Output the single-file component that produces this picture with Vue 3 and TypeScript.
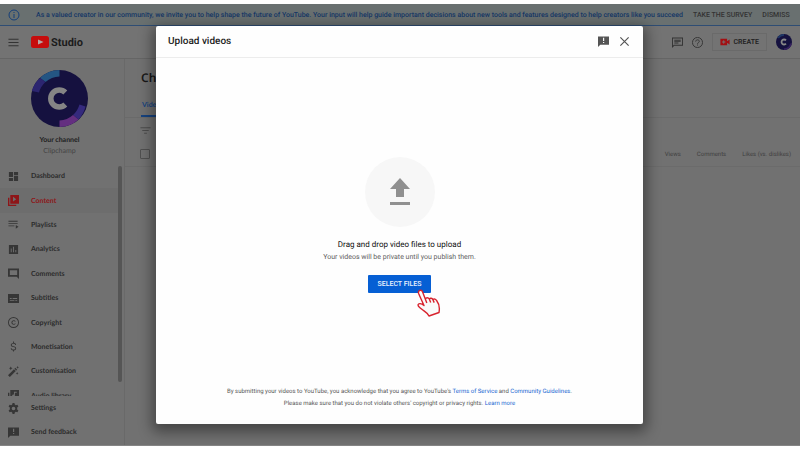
<script setup lang="ts">
interface NavItem {
  label: string
  icon: string
  active?: boolean
}

const navItems: NavItem[] = [
  { label: 'Dashboard', icon: 'M2 2h9v11H2zM13 2h9v7h-9zM2 15h9v7H2zM13 11h9v11h-9z' },
  { label: 'Content', icon: 'M0 6h3v15h15v3H0zM5 0h19v19H5zM11 4v10l7-5z', active: true },
  { label: 'Playlists', icon: 'M1 4h20v2H1zM1 9h20v2H1zM1 14h13v2H1zM17 13l6 4-6 4z' },
  { label: 'Analytics', icon: 'M2 2h20v20H2zM6 10v8h2v-8zM11 6v12h2V6zM16 13v5h2v-5z' },
  { label: 'Comments', icon: 'M0 1h24v23l-5-5H0zM4 5v10h16V5z' },
  { label: 'Subtitles', icon: 'M0 2h24v20H0zM4 11v2h4v-2zM10 11v2h10v-2zM4 15v2h10v-2zM16 15v2h4v-2z' },
  { label: 'Copyright', icon: 'M12 0a12 12 0 1 0 0 24 12 12 0 0 0 0-24zm0 2a10 10 0 1 1 0 20 10 10 0 0 1 0-20zM17 10a5 5 0 1 0 0 4h-2.200a3 3 0 1 1 0-4z' },
  { label: 'Monetisation', icon: 'M11 1h2v3c3 .5 4.500 2 4.500 4.500h-2C15.500 6.500 14 6 12 6c-2.500 0-3.800 1-3.800 2.500 0 1.600 1.300 2.200 4 2.900 3.300.8 5.600 2 5.600 4.800 0 2.300-1.800 3.900-4.800 4.300V23h-2v-2.500c-3-.4-5-2-5-4.800h2c.2 2 1.500 2.900 4 2.900s3.700-1 3.700-2.300c0-1.400-.8-2.200-4-3-3.500-.8-5.600-2-5.600-4.700 0-2.300 1.900-4 4.900-4.500z' },
  { label: 'Customisation', icon: 'M0 20L13 7l4 4L4 24zM14 6l2-2 4 4-2 2zM6 1l1.500 3L10 5 7.500 6 6 9 4.500 6 2 5l2.500-1zM20 13l1 2 2 1-2 1-1 2-1-2-2-1 2-1zM21 0l1 2 2 1-2 1-1 2-1-2-2-1 2-1z' },
  { label: 'Audio library', icon: 'M0 6h3v15h15v3H0zM5 0h19v19H5zM13 4v6a3 3 0 1 0 2 3V6h4V4z' },
]

const feedbackIcon = 'M0 1h24v18H5l-5 5zM11 4v7h2.500V4zM11 13v2.500h2.500V13z'

const footerItems: NavItem[] = [
  { label: 'Settings', icon: 'M10 0h4l.8 3.500 2.200 1.300 3.500-1 2.200 3.700-2.700 2.500v4l2.700 2.500-2.200 3.700-3.500-1-2.200 1.300L14 24h-4l-.8-3.500L7 19.200l-3.500 1-2.200-3.700L4 14v-4L1.300 7.500l2.200-3.700 3.500 1 2.200-1.300zM12 8a4 4 0 1 0 0 8 4 4 0 0 0 0-8z' },
  { label: 'Send feedback', icon: feedbackIcon },
]

const columns: string[] = ['Views', 'Comments', 'Likes (vs. dislikes)']
</script>

<template>
  <div class="page">
    <div class="banner">
      <svg class="info" viewBox="0 0 24 24" aria-hidden="true">
        <circle cx="12" cy="12" r="10" fill="none" stroke="currentColor" stroke-width="2" />
        <path fill="currentColor" d="M11 6h2v2h-2zM11 10h2v8h-2z" />
      </svg>
      <p>As a valued creator in our community, we invite you to help shape the future of YouTube. Your input will help guide important decisions about new tools and features designed to help creators like you succeed</p>
      <button type="button">TAKE THE SURVEY</button>
      <button type="button">DISMISS</button>
    </div>

    <header class="topbar">
      <button class="plain" type="button" aria-label="Menu">
        <svg class="icon" viewBox="0 0 24 24"><path d="M1 4h22v2H1zM1 11h22v2H1zM1 18h22v2H1z" /></svg>
      </button>
      <a class="brand" href="#">
        <svg viewBox="0 0 36 24" aria-hidden="true">
          <rect width="36" height="24" rx="5" fill="#c60d0d" />
          <path d="M14 7l11 5-11 5z" fill="#b9a5a5" />
        </svg>
        <span>Studio</span>
      </a>
      <div class="tools">
        <button class="plain" type="button" aria-label="Messages">
          <svg class="icon" viewBox="0 0 24 24"><path fill-rule="evenodd" d="M0 1h24v18H5l-5 5zM2 3v16l2-2h18V3zM5 6h14v2H5zM5 9h14v2H5zM5 12h9v2H5z" /></svg>
        </button>
        <button class="plain" type="button" aria-label="Help">
          <svg class="icon" viewBox="0 0 24 24">
            <circle cx="12" cy="12" r="11" fill="none" stroke="currentColor" stroke-width="2" />
            <path d="M8 10c0-5 8-5 8-.5 0 2.500-4 3-4 5.500" fill="none" stroke="currentColor" stroke-width="2" />
            <path d="M11 16.500h2v2h-2z" />
          </svg>
        </button>
        <button class="create" type="button">
          <svg viewBox="0 0 24 18" aria-hidden="true">
            <path fill="#a30f12" fill-rule="evenodd" d="M1 1h16v6l6-4v12l-6-4v6H1zM8 5v3H5v2h3v3h2v-3h3V8h-3V5z" />
          </svg>
          CREATE
        </button>
        <svg class="avatar" viewBox="0 0 57 57" aria-hidden="true">
          <circle cx="28.500" cy="28.500" r="28.500" fill="#15113f" />
          <path d="M5 12A28.500 28.500 0 0 1 28.500 0v6A22 22 0 0 0 10 16z" fill="#1f3766" />
          <path d="M57 34A28.500 28.500 0 0 1 28.500 57v-6A22 22 0 0 0 50 34z" fill="#35205f" />
          <path d="M35.500 22.500a9 9 0 1 0 0 12" fill="none" stroke="#888" stroke-width="6.500" />
        </svg>
      </div>
    </header>

    <div class="body">
      <aside class="sidebar">
        <div class="channel">
          <svg class="portrait" viewBox="0 0 57 57" aria-hidden="true">
            <circle cx="28.500" cy="28.500" r="28.500" fill="#15113f" />
            <path d="M9 8A28.500 28.500 0 0 1 28.500 0v6.500a22 22 0 0 0-14 5.500z" fill="#245583" />
            <path d="M.8 21A28.500 28.500 0 0 1 9 8l5.500 4A22 22 0 0 0 8 22.500z" fill="#2c2570" />
            <path d="M54.500 36.500A28.500 28.500 0 0 1 47.500 49.500L42 45a22 22 0 0 0 6.500-10.500z" fill="#352a7d" />
            <path d="M47.500 49.500A28.500 28.500 0 0 1 28.500 57v-6.500A22 22 0 0 0 42 45z" fill="#642f80" />
            <path d="M34.300 22.500a8.500 8.500 0 1 0 0 12" fill="none" stroke="#858585" stroke-width="5.500" />
          </svg>
          <strong>Your channel</strong>
          <span>Clipchamp</span>
        </div>
        <nav class="scroller">
          <ul>
            <li v-for="item in navItems" :key="item.label">
              <a href="#" :class="{ active: item.active }">
                <svg class="icon" viewBox="0 0 24 24" aria-hidden="true"><path fill-rule="evenodd" :d="item.icon" /></svg>
                {{ item.label }}
              </a>
            </li>
          </ul>
          <span class="thumb"></span>
        </nav>
        <ul class="footer-nav">
          <li v-for="item in footerItems" :key="item.label">
            <a href="#">
              <svg class="icon" viewBox="0 0 24 24" aria-hidden="true"><path fill-rule="evenodd" :d="item.icon" /></svg>
              {{ item.label }}
            </a>
          </li>
        </ul>
      </aside>

      <main class="content">
        <h1>Channel content</h1>
        <div class="tabs"><a href="#">Videos</a></div>
        <div class="filter">
          <svg class="icon" viewBox="0 0 24 24" aria-hidden="true"><path d="M1 5h22v2H1zM5 11h14v2H5zM9 17h6v2H9z" /></svg>
        </div>
        <div class="list-head">
          <input type="checkbox" aria-label="Select all videos" />
          <span v-for="column in columns" :key="column">{{ column }}</span>
        </div>
      </main>
    </div>

    <section class="dialog" role="dialog" aria-labelledby="dialog-title">
      <header>
        <h2 id="dialog-title">Upload videos</h2>
        <button class="plain" type="button" aria-label="Send feedback">
          <svg class="icon" viewBox="0 0 24 24"><path fill-rule="evenodd" :d="feedbackIcon" /></svg>
        </button>
        <button class="plain" type="button" aria-label="Close">
          <svg class="icon" viewBox="0 0 24 24"><path d="M3 3l18 18M21 3L3 21" stroke="currentColor" stroke-width="2.600" /></svg>
        </button>
      </header>
      <div class="drop">
        <div class="disc">
          <svg viewBox="0 0 22 28" aria-hidden="true"><path d="M11 0l10 11h-6v8H7v-8H1zM1 24h20v3H1z" fill="#909090" /></svg>
        </div>
        <p class="lead">Drag and drop video files to upload</p>
        <p class="hint">Your videos will be private until you publish them.</p>
        <div class="action">
          <button class="select" type="button">SELECT FILES</button>
          <svg class="hand" viewBox="0 0 24 28" aria-hidden="true">
            <path d="M1.800 2.200C2.800.8 4.800 1 5.500 2.800L8.300 10c.8-1.700 3-1.700 4 0 .9-1.300 2.900-1 3.600.6 1.300-1.200 3-.5 3.700.9C22 14.500 23 18 22 23.500L12 27c-1.200-3.300-4.800-4.500-7.800-7.200-1.400-1.300-3.400-2.500-3.200-4 .4-1.600 3.200-1.700 6 .7L1.600 4.500c-.3-.8-.2-1.600.2-2.300zM8.300 10l1.500 4M12.300 10l1.400 3.500M15.900 10.600l1.300 3" fill="#fafafa" stroke="#d8232e" stroke-width="1.400" stroke-linejoin="round" />
          </svg>
        </div>
      </div>
      <footer>
        <p>By submitting your videos to YouTube, you acknowledge that you agree to YouTube's <a href="#">Terms of Service</a> and <a href="#">Community Guidelines</a>.</p>
        <p>Please make sure that you do not violate others' copyright or privacy rights. <a href="#">Learn more</a></p>
      </footer>
    </section>
  </div>
</template>

<style>
body {
  margin: 0;
  background: #fff;
}
</style>

<style scoped>
.page {
  position: relative;
  box-sizing: border-box;
  height: 100vh;
  padding: 4px 0;
  display: flex;
  flex-direction: column;
  overflow: hidden;
  font-family: Roboto, 'Liberation Sans', sans-serif;
  text-rendering: geometricPrecision;
  color: #262626;
}

p,
h1,
h2,
ul {
  margin: 0;
  padding: 0;
}

ul {
  list-style: none;
}

a {
  color: inherit;
  text-decoration: none;
}

button {
  border: 0;
  padding: 0;
  background: none;
  font: inherit;
  color: inherit;
  text-rendering: inherit;
  white-space: nowrap;
}

.plain {
  display: flex;
}

.icon {
  display: block;
  width: 11px;
  height: 11px;
  flex: none;
  fill: currentColor;
}

.banner {
  display: flex;
  align-items: center;
  height: 21px;
  padding: 0 13px 0 8px;
  background: #697070;
  border-bottom: 1px solid #2e4d74;
  font-size: 7px;
  font-weight: 500;
  color: #333;
}

.banner p {
  flex: 1;
  white-space: nowrap;
  color: #153766;
}

.banner button {
  margin-left: 10px;
}

.info {
  flex: none;
  width: 12px;
  height: 12px;
  margin-right: 16px;
  color: #153f79;
}

.topbar {
  display: flex;
  align-items: center;
  height: 32px;
  padding: 0 8px;
  background: #737373;
  border-bottom: 1px solid #656565;
  color: #333;
}

.brand {
  display: flex;
  align-items: center;
  gap: 2px;
  margin-left: 12px;
}

.brand svg {
  width: 18px;
  height: 12px;
}

.brand span {
  font-size: 11px;
  font-weight: 700;
  color: #1c1c1c;
}

.tools {
  display: flex;
  align-items: center;
  gap: 9px;
  margin-left: auto;
}

.create {
  display: flex;
  align-items: center;
  gap: 4px;
  height: 18px;
  padding: 0 7px;
  border: 1px solid #6a6a6a;
  font-size: 7px;
  font-weight: 600;
  color: #222;
}

.create svg {
  width: 10px;
  height: 8px;
}

.avatar {
  width: 16px;
  height: 16px;
}

.body {
  flex: 1;
  min-height: 0;
  display: flex;
  background: #717171;
  border-bottom: 1px solid #858585;
}

.sidebar {
  box-sizing: border-box;
  width: 125px;
  flex: none;
  display: flex;
  flex-direction: column;
  border-right: 1px solid #696969;
  font-family: Lato, 'Noto Sans', sans-serif;
}

.channel {
  display: flex;
  flex-direction: column;
  align-items: center;
  height: 94px;
  padding: 11px 5px 0 0;
  font-size: 7px;
  line-height: 11px;
  color: #444;
}

.channel strong {
  margin-top: 8px;
  font-weight: 700;
  color: #1d1d1d;
}

.portrait {
  width: 57px;
  height: 57px;
}

.scroller {
  position: relative;
  flex: 1;
  min-height: 0;
  overflow: hidden;
}

.scroller ul {
  display: grid;
  grid-auto-rows: 1fr;
  height: 244px;
}

.thumb {
  position: absolute;
  top: 2px;
  right: 2px;
  bottom: 14px;
  width: 4px;
  border-radius: 2px;
  background: #555;
}

.sidebar li {
  display: grid;
}

.sidebar li a {
  display: flex;
  align-items: center;
  gap: 12px;
  margin-right: 6px;
  padding-left: 8px;
  font-size: 7px;
  font-weight: 700;
  color: #2b2b2b;
}

.sidebar li a .icon {
  color: #363636;
}

.sidebar li a.active,
.sidebar li a.active .icon {
  color: #8e1518;
}

.sidebar li a.active {
  background: #6d6d6d;
}

.footer-nav {
  display: grid;
  grid-auto-rows: 24px;
  padding-bottom: 1px;
}

.content {
  flex: 1;
  min-width: 0;
}

h1 {
  padding: 10px 16px 0;
  font-family: 'Noto Sans', 'Open Sans', sans-serif;
  font-size: 12px;
  line-height: 18px;
  font-weight: 600;
  color: #181818;
}

.tabs {
  height: 30px;
  padding-left: 16px;
  display: flex;
  border-bottom: 1px solid #6a6a6a;
  font-family: Lato, 'Noto Sans', sans-serif;
  font-size: 7px;
  font-weight: 700;
  color: #17437f;
}

.tabs a {
  display: flex;
  align-items: center;
  padding: 8px 1px 0;
  border-bottom: 2px solid #17437f;
}

.filter {
  height: 24px;
  padding-left: 15px;
  display: flex;
  align-items: center;
  color: #4c4c4c;
}

.list-head {
  display: flex;
  align-items: center;
  height: 24px;
  padding: 0 9px 0 15px;
  gap: 16px;
  border-bottom: 1px solid #6b6b6b;
  font-size: 6px;
  color: #404040;
}

.list-head input {
  appearance: none;
  box-sizing: border-box;
  width: 10px;
  height: 10px;
  margin: 0 auto 0 0;
  border: 1px solid #505050;
  border-radius: 1px;
}

.dialog {
  position: absolute;
  inset: 26px 157px 26px 156px;
  display: flex;
  flex-direction: column;
  border-radius: 2px;
  background: #fefefe;
  box-shadow: 0 4px 14px 4px rgba(0, 0, 0, 0.4);
}

.dialog > header {
  display: flex;
  align-items: center;
  gap: 10px;
  height: 31px;
  padding: 0 13px 0 12px;
  border-bottom: 1px solid #ececec;
  color: #555;
}

h2 {
  flex: 1;
  font-size: 10px;
  font-weight: 500;
  color: #222;
}

.drop {
  flex: 1;
  display: flex;
  flex-direction: column;
  align-items: center;
  justify-content: center;
  padding-top: 6px;
}

.disc {
  display: grid;
  place-items: center;
  width: 70px;
  height: 70px;
  margin-bottom: 12px;
  border-radius: 50%;
  background: #f7f7f7;
}

.disc svg {
  width: 22px;
  height: 28px;
}

.lead {
  font-size: 8px;
  line-height: 12px;
  color: #111;
}

.hint {
  font-size: 7px;
  line-height: 12px;
  color: #606060;
}

.action {
  position: relative;
  margin-top: 12px;
}

.select {
  display: block;
  height: 18px;
  padding: 0 9px;
  border-radius: 1px;
  background: #065fd4;
  font-size: 7px;
  font-weight: 500;
  color: #e8f1fd;
}

.hand {
  position: absolute;
  top: 14px;
  left: 49px;
  width: 24px;
  height: 28px;
}

.dialog footer {
  padding-bottom: 14px;
  text-align: center;
  font-size: 6px;
  line-height: 12px;
  color: #555;
}

.dialog footer a {
  color: #1967d2;
}
</style>
